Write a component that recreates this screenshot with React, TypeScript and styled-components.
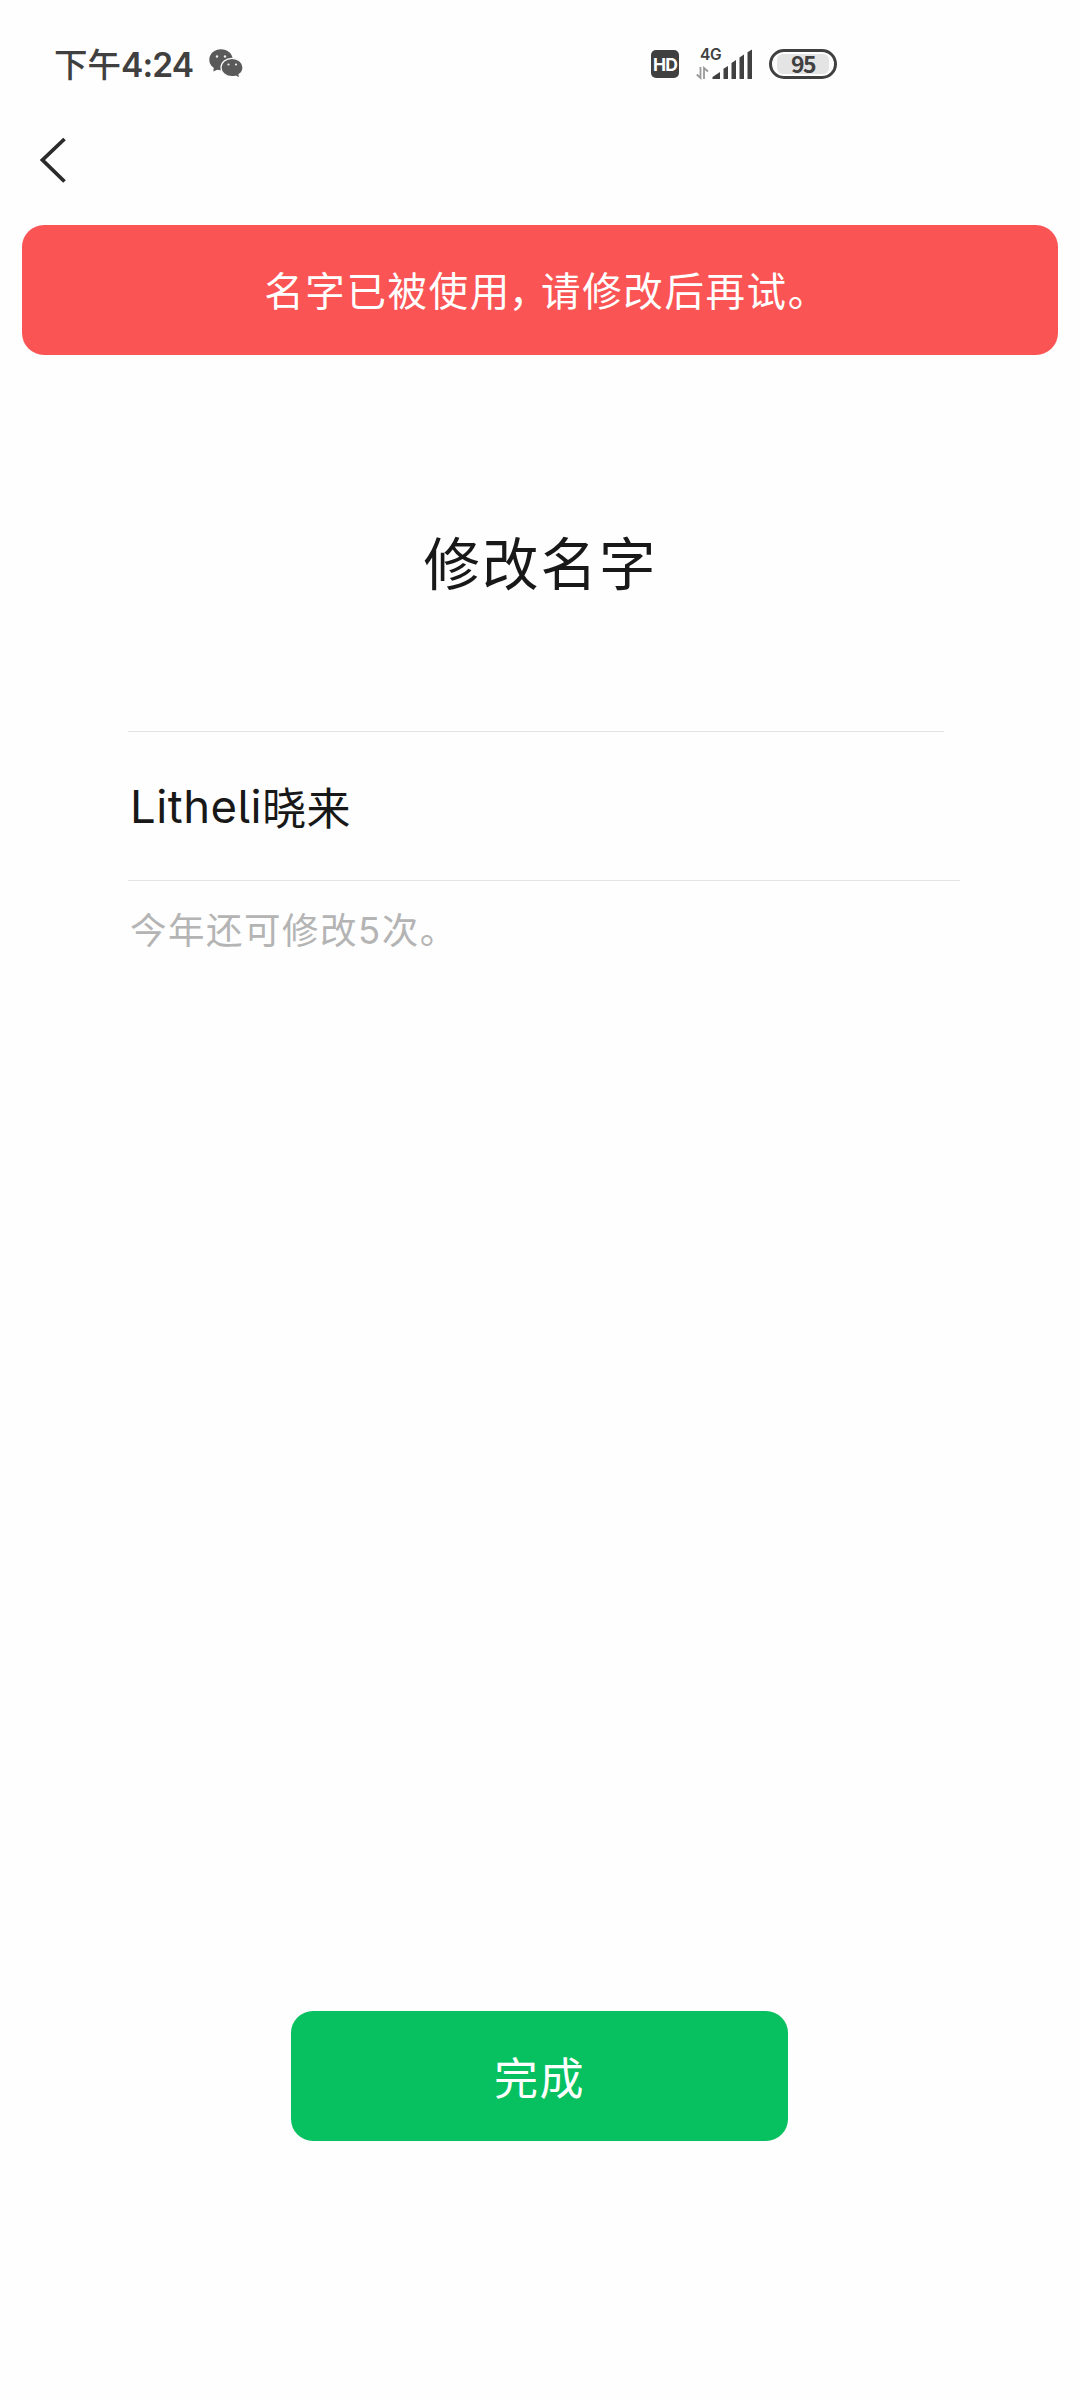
import React from "react";
import styled, { createGlobalStyle } from "styled-components";

const GlobalStyle = createGlobalStyle`
  * { box-sizing: border-box; }
  body {
    margin: 0;
    background: #fefefe;
    font-family: "Inter", "Noto Sans CJK SC", sans-serif;
  }
`;

const Screen = styled.main`
  display: flex;
  flex-direction: column;
  width: 1080px;
  height: 2400px;
  background: #fefefe;
`;

const StatusBar = styled.header`
  display: flex;
  justify-content: space-between;
  align-items: center;
  height: 128px;
  padding: 0 243px 0 54px;
  color: #404040;
`;

const StatusGroup = styled.div<{ $gap: number }>`
  display: flex;
  align-items: center;
  gap: ${(p) => p.$gap}px;
`;

const Clock = styled.time`
  padding-top: 2px;
  font-size: 33.5px;
  line-height: 40px;
  font-weight: 500;
  white-space: nowrap;
`;

const ClockDigits = styled.span`
  font-weight: 600;
  letter-spacing: -0.9px;
`;

const HdBadge = styled.span`
  display: flex;
  align-items: center;
  justify-content: center;
  width: 28px;
  height: 28px;
  margin-right: 1px;
  border-radius: 5px;
  background: #404040;
  color: #fff;
  font-size: 17.5px;
  font-weight: 700;
  letter-spacing: -0.8px;
`;

const Battery = styled.span`
  display: flex;
  width: 68px;
  height: 30px;
  padding: 2px 5px;
  border: 3.5px solid #404040;
  border-radius: 15px;
`;

const BatteryLevel = styled.span`
  display: flex;
  flex: 1;
  align-items: center;
  justify-content: center;
  padding-bottom: 2px;
  border-radius: 6px;
  background: #e4e4e4;
  font-family: "Noto Sans CJK SC", sans-serif;
  font-size: 23px;
  line-height: 1;
  font-weight: 700;
  letter-spacing: -1.5px;
`;

const NavBar = styled.nav`
  display: flex;
  height: 97px;
  padding: 8px 0 0 38px;
`;

const BackButton = styled.button`
  width: 30px;
  height: 48px;
  padding: 0;
  border: 0;
  background: none;
`;

const Banner = styled.div`
  display: flex;
  align-items: center;
  justify-content: center;
  height: 130px;
  margin: 0 22px;
  padding: 0 0 4px 13px;
  border-radius: 22px;
  background: #fb5454;
  color: #fff;
  font-size: 39.5px;
  letter-spacing: 1.6px;
`;

const Comma = styled.span`
  margin-left: -2px;
  letter-spacing: -7.2px;
`;

const Title = styled.h1`
  margin: 170px 0 0;
  padding-left: 1px;
  color: #181818;
  font-size: 56.5px;
  line-height: 80px;
  font-weight: 400;
  letter-spacing: 2px;
  text-align: center;
`;

const Form = styled.section`
  display: flex;
  flex-direction: column;
  align-items: flex-start;
  padding-left: 128px;
  margin-top: 126px;
`;

const Divider = styled.div<{ $width: number }>`
  width: ${(p) => p.$width}px;
  height: 1px;
  background: #e3e3e3;
`;

const NameField = styled.div`
  display: flex;
  align-items: center;
  height: 148px;
  padding-left: 2px;
  color: #181818;
  font-size: 44px;
  letter-spacing: 0.5px;
`;

const Latin = styled.span`
  padding-top: 1px;
  font-size: 45.5px;
  letter-spacing: 0.5px;
  font-feature-settings: "cv05";
`;

const Hint = styled.p`
  margin: 23px 0 0 2px;
  color: #b4b4b4;
  font-size: 36.5px;
  line-height: 54px;
  font-weight: 400;
  letter-spacing: 1.5px;
`;

const Submit = styled.button`
  align-self: center;
  width: 497px;
  height: 130px;
  margin: auto 1px 259px 0;
  padding: 0;
  border: 0;
  border-radius: 22px;
  background: #07c160;
  color: #fff;
  font-family: inherit;
  font-size: 44px;
  letter-spacing: 1.5px;
`;

const WeChatIcon = () => (
  <svg width="35" height="30" viewBox="0 0 35 30">
    <g fill="#5a5a5a">
      <ellipse cx="12" cy="10.7" rx="11.7" ry="10.5" />
      <path d="M5 17 L4.3 22.5 L11 19.5 Z" />
    </g>
    <g fill="#5a5a5a" stroke="#fefefe" strokeWidth="1.2">
      <path d="M23 9.3C29.2 9.3 34 13.4 34 18.5C34 21.8 32.4 24 30 25.6L30.8 29L26.5 27.2Q25 27.7 23 27.7C16.9 27.7 12 23.6 12 18.5C12 13.4 16.9 9.3 23 9.3Z" />
    </g>
    <g fill="#eee">
      <circle cx="8" cy="7.5" r="1.2" />
      <circle cx="16" cy="7.5" r="1.2" />
      <circle cx="19.5" cy="15.5" r="1.1" />
      <circle cx="27" cy="15.5" r="1.1" />
    </g>
  </svg>
);

const SignalIcon = () => (
  <svg width="57" height="50" viewBox="0 -8 57 50">
    <text x="4" y="12.5" fontSize="15.5" fontWeight="600" fill="#404040" letterSpacing="-0.2">
      4G
    </text>
    <g fill="none" stroke="#999" strokeWidth="1.8">
      <path d="M4.5 20V31L0.8 27.5" />
      <path d="M8 32V21L12 24.5" />
    </g>
    <g fill="#404040">
      <path d="M16.5 32V30L24 25V32Z" />
      <path d="M27.5 21.8L32 19V32H27.5Z" />
      <path d="M35.5 16L40 13V32H35.5Z" />
      <path d="M43.5 10.5L48 7.5V32H43.5Z" />
      <path d="M51.5 5.3L56 2.5V32H51.5Z" />
    </g>
  </svg>
);

export default function App() {
  return (
    <Screen>
      <GlobalStyle />
      <StatusBar>
        <StatusGroup $gap={16}>
          <Clock>
            下午<ClockDigits>4:24</ClockDigits>
          </Clock>
          <WeChatIcon />
        </StatusGroup>
        <StatusGroup $gap={16}>
          <HdBadge>HD</HdBadge>
          <SignalIcon />
          <Battery>
            <BatteryLevel>95</BatteryLevel>
          </Battery>
        </StatusGroup>
      </StatusBar>
      <NavBar>
        <BackButton aria-label="返回">
          <svg width="30" height="48" viewBox="0 0 30 48" fill="none" stroke="#2b2b2b" strokeWidth="3.8">
            <path d="M26.5 3L4.5 24L26.5 45.5" />
          </svg>
        </BackButton>
      </NavBar>
      <Banner role="alert">
        <span>
          名字已被使用<Comma>，</Comma>请修改后再试。
        </span>
      </Banner>
      <Title>修改名字</Title>
      <Form>
        <Divider $width={816} />
        <NameField>
          <Latin>Litheli</Latin>晓来
        </NameField>
        <Divider $width={832} />
        <Hint>今年还可修改5次。</Hint>
      </Form>
      <Submit>完成</Submit>
    </Screen>
  );
}
